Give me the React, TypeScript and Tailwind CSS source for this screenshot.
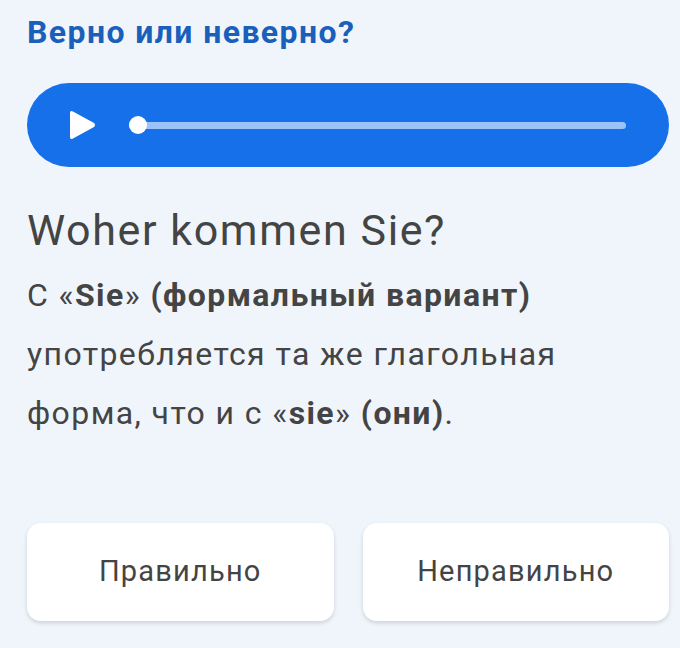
import React from "react";

export default function App() {
  return (
    <div className="w-[680px] h-[648px] bg-[#f0f5fc] overflow-hidden" style={{ fontFamily: "Roboto, 'Noto Sans', sans-serif" }}>
      <div className="pl-[27px] pr-[11px] pt-[12px]">
        <h1 className="text-[32px] leading-[40px] font-bold tracking-[1.4px] text-[#1a5fba]">Верно или неверно?</h1>
        <div className="mt-[31px] h-[84px] rounded-full bg-[#1570ea] flex items-center pl-[41px] pr-[43px]">
          <svg width="28" height="30" viewBox="0 0 28 30" className="shrink-0">
            <path d="M2 3 Q2 0 5 1.5 L26 13 Q28 15 26 17 L5 28.5 Q2 30 2 27 Z" fill="#ffffff" />
          </svg>
          <div className="ml-[33px] flex-1 relative h-[18px] flex items-center">
            <div className="w-full h-[7px] rounded-full bg-[#9cc3f7]" />
            <div className="absolute left-0 top-0 w-[18px] h-[18px] rounded-full bg-white" />
          </div>
        </div>
        <div className="mt-[37px] text-[43px] leading-[52px] tracking-[1.6px] text-[#444444]">Woher kommen Sie?</div>
        <p className="mt-[10px] max-w-[590px] text-[32px] leading-[59px] tracking-[1.4px] text-[#444444]">
          С «<b className="font-bold">Sie</b>» <b className="font-bold">(формальный вариант)</b> употребляется та же глагольная форма, что и с «<b className="font-bold">sie</b>» <b className="font-bold">(они)</b>.
        </p>
        <div className="mt-[80px] grid grid-cols-2 gap-[29px]">
          <button className="h-[98px] rounded-[14px] bg-white shadow-[0_2px_4px_rgba(0,0,0,0.15)] text-[29px] tracking-[1.2px] text-[#444444]">Правильно</button>
          <button className="h-[98px] rounded-[14px] bg-white shadow-[0_2px_4px_rgba(0,0,0,0.15)] text-[29px] tracking-[1.2px] text-[#444444]">Неправильно</button>
        </div>
      </div>
    </div>
  );
}
